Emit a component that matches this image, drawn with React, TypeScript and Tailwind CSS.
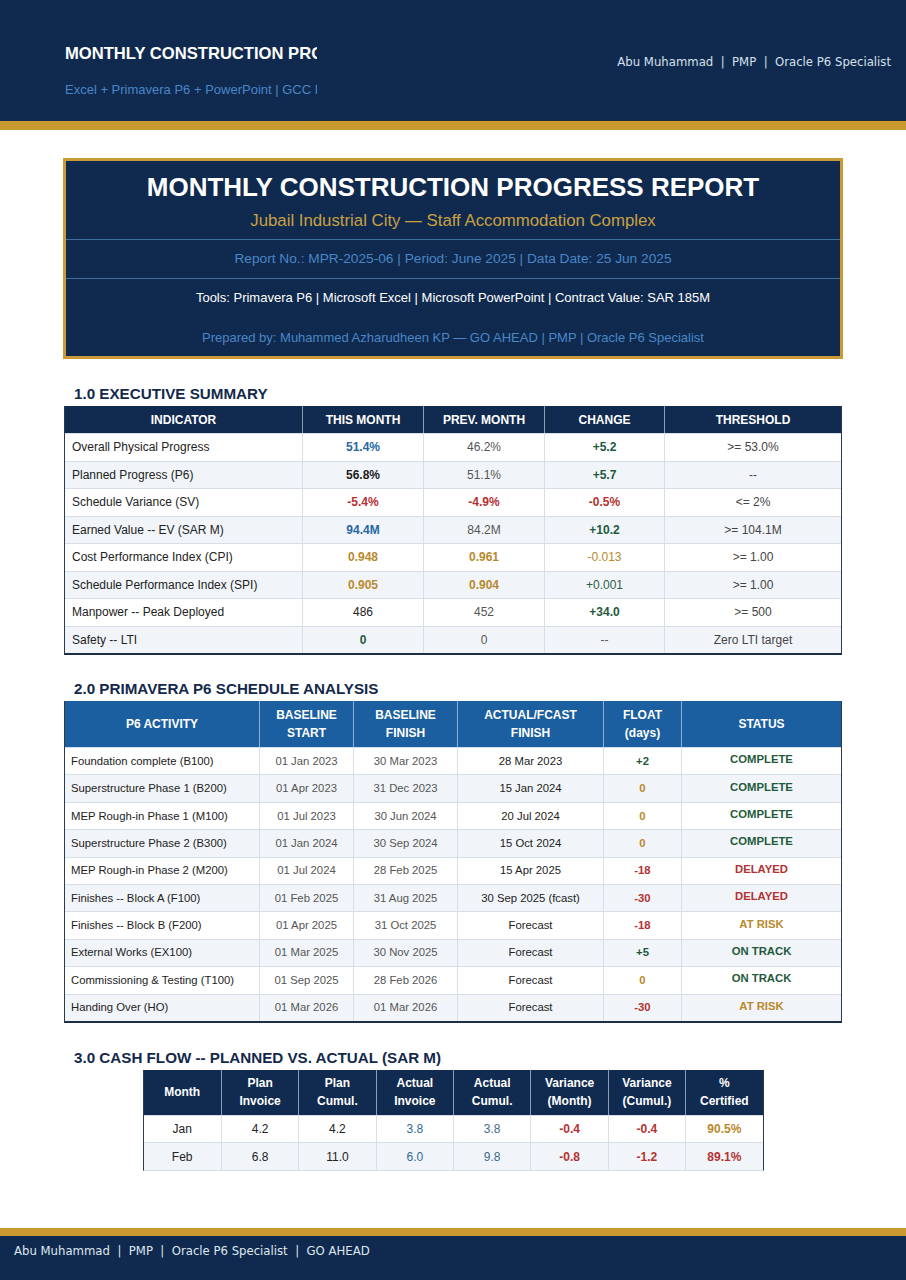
import React from "react";

const NAVY = "bg-[#0f2a4e]";

type Cell = { v: string; c?: string };

const execRows: Cell[][] = [
  [{ v: "Overall Physical Progress" }, { v: "51.4%", c: "blue" }, { v: "46.2%" }, { v: "+5.2", c: "green" }, { v: ">= 53.0%" }],
  [{ v: "Planned Progress (P6)" }, { v: "56.8%", c: "dark" }, { v: "51.1%" }, { v: "+5.7", c: "green" }, { v: "--" }],
  [{ v: "Schedule Variance (SV)" }, { v: "-5.4%", c: "red" }, { v: "-4.9%", c: "red" }, { v: "-0.5%", c: "red" }, { v: "<= 2%" }],
  [{ v: "Earned Value -- EV (SAR M)" }, { v: "94.4M", c: "blue" }, { v: "84.2M" }, { v: "+10.2", c: "green" }, { v: ">= 104.1M" }],
  [{ v: "Cost Performance Index (CPI)" }, { v: "0.948", c: "gold" }, { v: "0.961", c: "gold" }, { v: "-0.013", c: "goldn" }, { v: ">= 1.00" }],
  [{ v: "Schedule Performance Index (SPI)" }, { v: "0.905", c: "gold" }, { v: "0.904", c: "gold" }, { v: "+0.001", c: "greenn" }, { v: ">= 1.00" }],
  [{ v: "Manpower -- Peak Deployed" }, { v: "486", c: "plain" }, { v: "452" }, { v: "+34.0", c: "green" }, { v: ">= 500" }],
  [{ v: "Safety -- LTI" }, { v: "0", c: "green" }, { v: "0" }, { v: "--" }, { v: "Zero LTI target" }],
];

const p6Rows: Cell[][] = [
  [{ v: "Foundation complete (B100)" }, { v: "01 Jan 2023" }, { v: "30 Mar 2023" }, { v: "28 Mar 2023" }, { v: "+2", c: "green" }, { v: "COMPLETE", c: "green" }],
  [{ v: "Superstructure Phase 1 (B200)" }, { v: "01 Apr 2023" }, { v: "31 Dec 2023" }, { v: "15 Jan 2024" }, { v: "0", c: "gold" }, { v: "COMPLETE", c: "green" }],
  [{ v: "MEP Rough-in Phase 1 (M100)" }, { v: "01 Jul 2023" }, { v: "30 Jun 2024" }, { v: "20 Jul 2024" }, { v: "0", c: "gold" }, { v: "COMPLETE", c: "green" }],
  [{ v: "Superstructure Phase 2 (B300)" }, { v: "01 Jan 2024" }, { v: "30 Sep 2024" }, { v: "15 Oct 2024" }, { v: "0", c: "gold" }, { v: "COMPLETE", c: "green" }],
  [{ v: "MEP Rough-in Phase 2 (M200)" }, { v: "01 Jul 2024" }, { v: "28 Feb 2025" }, { v: "15 Apr 2025" }, { v: "-18", c: "red" }, { v: "DELAYED", c: "red" }],
  [{ v: "Finishes -- Block A (F100)" }, { v: "01 Feb 2025" }, { v: "31 Aug 2025" }, { v: "30 Sep 2025 (fcast)" }, { v: "-30", c: "red" }, { v: "DELAYED", c: "red" }],
  [{ v: "Finishes -- Block B (F200)" }, { v: "01 Apr 2025" }, { v: "31 Oct 2025" }, { v: "Forecast" }, { v: "-18", c: "red" }, { v: "AT RISK", c: "gold" }],
  [{ v: "External Works (EX100)" }, { v: "01 Mar 2025" }, { v: "30 Nov 2025" }, { v: "Forecast" }, { v: "+5", c: "green" }, { v: "ON TRACK", c: "green" }],
  [{ v: "Commissioning & Testing (T100)" }, { v: "01 Sep 2025" }, { v: "28 Feb 2026" }, { v: "Forecast" }, { v: "0", c: "gold" }, { v: "ON TRACK", c: "green" }],
  [{ v: "Handing Over (HO)" }, { v: "01 Mar 2026" }, { v: "01 Mar 2026" }, { v: "Forecast" }, { v: "-30", c: "red" }, { v: "AT RISK", c: "gold" }],
];

const cashRows: Cell[][] = [
  [{ v: "Jan" }, { v: "4.2" }, { v: "4.2" }, { v: "3.8", c: "bluen" }, { v: "3.8", c: "bluegray" }, { v: "-0.4", c: "red" }, { v: "-0.4", c: "red" }, { v: "90.5%", c: "gold" }],
  [{ v: "Feb" }, { v: "6.8" }, { v: "11.0" }, { v: "6.0", c: "bluen" }, { v: "9.8", c: "bluegray" }, { v: "-0.8", c: "red" }, { v: "-1.2", c: "red" }, { v: "89.1%", c: "red" }],
];

const tone = (c: string | undefined, fallback: string) => {
  switch (c) {
    case "blue":
      return "font-bold text-[#2568a2]";
    case "bluen":
      return "text-[#2f6a96]";
    case "bluegray":
      return "text-[#3f6b8e]";
    case "dark":
      return "font-bold text-[#1c1c1c]";
    case "red":
      return "font-bold text-[#b63131]";
    case "gold":
      return "font-bold text-[#b9892c]";
    case "goldn":
      return "text-[#b9892c]";
    case "green":
      return "font-bold text-[#1f5a3b]";
    case "greenn":
      return "text-[#2d5e45]";
    case "plain":
      return "text-[#222]";
    default:
      return fallback;
  }
};

const SectionTitle = ({ children }: { children: React.ReactNode }) => (
  <h2 className="pl-[10px] text-[15.2px] leading-[18px] font-bold text-[#13294b]">{children}</h2>
);

export default function App() {
  return (
    <div className="flex min-h-[1280px] flex-col bg-white font-['Liberation_Sans',Arial,sans-serif]">
      {/* top banner */}
      <header className={`flex h-[121px] ${NAVY}`}>
        <div className="w-[317px] shrink-0 overflow-hidden pt-[44px] pl-[65px] whitespace-nowrap">
          <div className="text-[16.6px] leading-[20px] font-bold text-white">MONTHLY CONSTRUCTION PROGRESS REPORT</div>
          <div className="mt-[18px] text-[13px] leading-[16px] text-[#4a86c6]">
            Excel + Primavera P6 + PowerPoint | GCC Projects
          </div>
        </div>
        <div className="flex flex-1 items-center justify-end border-b border-[#182836] pt-[6px] pr-[15px]">
          <span className="font-['DejaVu_Sans',sans-serif] text-[11.7px] whitespace-pre text-[#d6e0ec]">
            Abu Muhammad  |  PMP  |  Oracle P6 Specialist
          </span>
        </div>
      </header>
      <div className="h-[9px] bg-[#c8992f]" />

      <main className="px-[64px] pt-[28px]">
        {/* title box */}
        <div className="mx-[-1px] border-[3px] border-[#c99a35] bg-[#0f2a4e] text-center">
          <div className="pt-[11px] pb-[8px]">
            <div className="text-[26px] leading-[30px] font-bold text-white">MONTHLY CONSTRUCTION PROGRESS REPORT</div>
            <div className="mt-[9px] text-[16.8px] leading-[20px] text-[#c9a042]">
              Jubail Industrial City — Staff Accommodation Complex
            </div>
          </div>
          <div className="h-px bg-[#3f6f9f]" />
          <div className="flex h-[38px] items-center justify-center text-[13.7px] text-[#4a86c6]">
            Report No.: MPR-2025-06 | Period: June 2025 | Data Date: 25 Jun 2025
          </div>
          <div className="h-px bg-[#3f6f9f]" />
          <div className="pt-[11px] pb-[10px]">
            <div className="text-[13px] leading-[16px] text-white">
              Tools: Primavera P6 | Microsoft Excel | Microsoft PowerPoint | Contract Value: SAR 185M
            </div>
            <div className="mt-[24px] text-[13px] leading-[16px] text-[#4a86c6]">
              Prepared by: Muhammed Azharudheen KP — GO AHEAD | PMP | Oracle P6 Specialist
            </div>
          </div>
        </div>

        {/* 1.0 */}
        <div className="mt-[26px]">
          <SectionTitle>1.0 EXECUTIVE SUMMARY</SectionTitle>
          <div className="mt-[3px] border-x border-b-2 border-x-[#2b3a4e] border-b-[#1d2e47] text-[12px]">
            <div className="grid h-[27px] grid-cols-[237px_121px_121px_120px_1fr] bg-[#112b50] font-bold text-white">
              {["INDICATOR", "THIS MONTH", "PREV. MONTH", "CHANGE", "THRESHOLD"].map((h, i) => (
                <div key={h} className={`flex items-center justify-center ${i > 0 ? "border-l border-[#8a9db5]" : ""}`}>
                  {h}
                </div>
              ))}
            </div>
            {execRows.map((row, r) => (
              <div
                key={r}
                className={`grid h-[27.5px] grid-cols-[237px_121px_121px_120px_1fr] border-t border-[#d7dee7] ${r % 2 ? "bg-[#f1f5f9]" : "bg-white"}`}
              >
                {row.map((cell, i) =>
                  i === 0 ? (
                    <div key={i} className="flex items-center pl-[7px] text-[#222]">
                      {cell.v}
                    </div>
                  ) : (
                    <div
                      key={i}
                      className={`flex items-center justify-center border-l border-[#d7dee7] ${tone(cell.c, i === 4 ? "text-[#444]" : "text-[#555]")}`}
                    >
                      {cell.v}
                    </div>
                  ),
                )}
              </div>
            ))}
          </div>
        </div>

        {/* 2.0 */}
        <div className="mt-[25px]">
          <SectionTitle>2.0 PRIMAVERA P6 SCHEDULE ANALYSIS</SectionTitle>
          <div className="mt-[3px] border-x border-b-2 border-x-[#2b3a4e] border-b-[#1d2e47]">
            <div className="grid h-[46px] grid-cols-[194px_94px_104px_146px_78px_1fr] bg-[#1b5fa0] text-[12px] leading-[18px] font-bold text-white">
              {[["P6 ACTIVITY"], ["BASELINE", "START"], ["BASELINE", "FINISH"], ["ACTUAL/FCAST", "FINISH"], ["FLOAT", "(days)"], ["STATUS"]].map(
                (h, i) => (
                  <div
                    key={i}
                    className={`flex flex-col items-center justify-center text-center ${i > 0 ? "border-l border-[#8fb0d4]" : ""}`}
                  >
                    {h.map((line) => (
                      <span key={line}>{line}</span>
                    ))}
                  </div>
                ),
              )}
            </div>
            {p6Rows.map((row, r) => (
              <div
                key={r}
                className={`grid h-[27.4px] grid-cols-[194px_94px_104px_146px_78px_1fr] border-t border-[#d7dee7] text-[11.3px] ${r % 2 ? "bg-[#f1f5f9]" : "bg-white"}`}
              >
                {row.map((cell, i) =>
                  i === 0 ? (
                    <div key={i} className="flex items-center pl-[6px] whitespace-nowrap text-[#222]">
                      {cell.v}
                    </div>
                  ) : (
                    <div
                      key={i}
                      className={`flex items-center justify-center border-l border-[#d7dee7] ${i === 5 ? "pb-[3px]" : ""} ${tone(cell.c, i === 3 ? "text-[#222]" : "text-[#555]")}`}
                    >
                      {cell.v}
                    </div>
                  ),
                )}
              </div>
            ))}
          </div>
        </div>

        {/* 3.0 */}
        <div className="mt-[26px]">
          <SectionTitle>3.0 CASH FLOW -- PLANNED VS. ACTUAL (SAR M)</SectionTitle>
          <div className="mx-auto mt-[3px] w-[621px] border-x border-b border-x-[#2b3a4e] border-b-[#d7dee7] text-[12px]">
            <div className="grid h-[45px] grid-cols-8 bg-[#112b50] leading-[18px] font-bold text-white">
              {[["Month"], ["Plan", "Invoice"], ["Plan", "Cumul."], ["Actual", "Invoice"], ["Actual", "Cumul."], ["Variance", "(Month)"], ["Variance", "(Cumul.)"], ["%", "Certified"]].map(
                (h, i) => (
                  <div
                    key={i}
                    className={`flex flex-col items-center justify-center text-center ${i > 0 ? "border-l border-[#8a9db5]" : ""}`}
                  >
                    {h.map((line) => (
                      <span key={line}>{line}</span>
                    ))}
                  </div>
                ),
              )}
            </div>
            {cashRows.map((row, r) => (
              <div
                key={r}
                className={`grid h-[27.5px] grid-cols-8 border-t border-[#d7dee7] ${r % 2 ? "bg-[#f1f5f9]" : "bg-white"}`}
              >
                {row.map((cell, i) => (
                  <div
                    key={i}
                    className={`flex items-center justify-center ${i > 0 ? "border-l border-[#d7dee7]" : ""} ${tone(cell.c, "text-[#222]")}`}
                  >
                    {cell.v}
                  </div>
                ))}
              </div>
            ))}
          </div>
        </div>
      </main>

      {/* footer */}
      <footer className="mt-auto">
        <div className="h-[8px] bg-[#c8992f]" />
        <div
          className={`h-[44px] pt-[8px] pl-[14px] font-['DejaVu_Sans',sans-serif] text-[11.7px] leading-[14px] whitespace-pre text-[#dfe6ef] ${NAVY}`}
        >
          Abu Muhammad  |  PMP  |  Oracle P6 Specialist  |  GO AHEAD
        </div>
      </footer>
    </div>
  );
}
